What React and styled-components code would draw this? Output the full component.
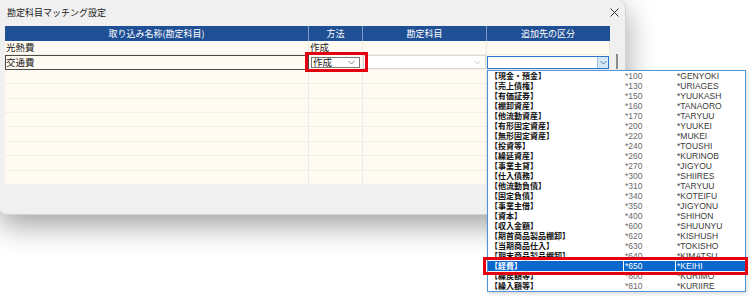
import React from 'react'
import styled, { createGlobalStyle } from 'styled-components'

const GlobalStyle = createGlobalStyle`
  html, body {
    margin: 0;
    padding: 0;
    background: #ffffff;
  }
  body {
    font-family: "Noto Sans CJK JP", "Noto Sans", sans-serif;
    color: #1a1a1a;
  }
`

const Page = styled.div`
  position: relative;
  width: 750px;
  height: 296px;
  overflow: hidden;
  background: #ffffff;
`

const Dialog = styled.div`
  width: 626px;
  height: 215px;
  box-sizing: border-box;
  background: #f0f0f0;
  border: 1px solid #d2d2d2;
  border-top: none;
  border-left: none;
  border-radius: 0 8px 8px 6px;
  box-shadow: 0 10px 30px rgba(0, 0, 0, 0.38);
  display: flex;
  flex-direction: column;
`

const TitleBar = styled.div`
  height: 25px;
  display: flex;
  align-items: center;
  justify-content: space-between;
  padding: 0 6px 1px 7px;
  font-size: 9px;
  color: #222;
`

const Body = styled.div`
  display: flex;
  gap: 6px;
  padding-left: 5px;
`

const Table = styled.div`
  width: 605px;
  display: grid;
  grid-template-columns: 304px 54px 124px 123px;
  grid-template-rows: 15px repeat(10, 14.4px);
`

const HeadCell = styled.div`
  background: #1f5096;
  color: #ffffff;
  font-size: 9px;
  display: flex;
  align-items: center;
  justify-content: center;
  border-right: 1px solid ${p => (p.$last ? '#1f5096' : '#7f9cc8')};
`

const Cell = styled.div`
  box-sizing: border-box;
  background: #fffbf2;
  border-right: 1px solid #eceae4;
  border-bottom: 1px solid #f2efe6;
  font-size: 9.5px;
  line-height: 13px;
  padding-left: 1px;
  white-space: nowrap;
  display: flex;
  align-items: center;
`

const EditCell = styled(Cell)`
  border: 1px solid #4a4a4a;
  padding-left: 0;
`

const SlotCell = styled(Cell)`
  padding: ${p => p.$pad || '0'};
  align-items: stretch;
`

const Combo = styled.div`
  flex: 1;
  box-sizing: border-box;
  display: flex;
  align-items: center;
  justify-content: space-between;
  background: #ffffff;
  font-size: 9.5px;
  padding-left: 1px;
  border: 1px solid ${p => (p.$tone === 'focus' ? '#2a78d2' : p.$tone === 'muted' ? '#d9d9d9' : '#7a7a7a')};
`

const DropButton = styled.div`
  width: 10px;
  align-self: stretch;
  display: flex;
  align-items: center;
  justify-content: center;
  background: ${p => (p.$tone === 'focus' ? '#d6e8f8' : 'transparent')};
  border-left: 1px solid ${p => (p.$tone === 'focus' ? '#9cc3ea' : 'transparent')};
  margin-right: ${p => (p.$tone === 'focus' ? '0' : '3px')};
`

const ScrollTrack = styled.div`
  width: 2px;
  padding-top: 28px;
`

const ScrollThumb = styled.div`
  width: 2px;
  height: 15px;
  background: #8c8c8c;
`

const DropList = styled.div`
  position: absolute;
  left: 487px;
  top: 70px;
  width: 259px;
  box-sizing: border-box;
  background: #ffffff;
  border: 1px solid #4f93d8;
  box-shadow: 1px 2px 4px rgba(0, 0, 0, 0.15);
`

const Item = styled.div`
  display: grid;
  grid-template-columns: 135px 52px 1fr;
  height: 10px;
  line-height: 10px;
  font-size: 8px;
  background: ${p => (p.$active ? '#0a67cb' : 'transparent')};
  color: ${p => (p.$active ? '#ffffff' : '#111111')};
`

const ItemName = styled.span`
  padding-left: 2px;
  white-space: nowrap;
  font-weight: 700;
`

const ItemCode = styled.span`
  padding-left: 1px;
  white-space: nowrap;
  color: ${p => (p.$active ? '#ffffff' : p.$dim ? '#6a6a6a' : '#3a3a3a')};
  border-left: 1px solid ${p => (p.$active ? '#ffffff' : 'transparent')};
  font-family: "Liberation Sans", "Noto Sans", sans-serif;
  font-size: 8.5px;
`

const Callout = styled.div`
  position: absolute;
  left: ${p => p.$x}px;
  top: ${p => p.$y}px;
  width: ${p => p.$w}px;
  height: ${p => p.$h}px;
  box-sizing: border-box;
  border: 3px solid #e4000f;
  pointer-events: none;
`

const Chevron = ({ color = '#777' }) => (
  <svg width="7" height="5" viewBox="0 0 7 5">
    <polyline points="0.5,1 3.5,4 6.5,1" fill="none" stroke={color} strokeWidth="0.9" />
  </svg>
)

const CloseIcon = () => (
  <svg width="9" height="9" viewBox="0 0 9 9">
    <path d="M0.5 0.5 L8.5 8.5 M8.5 0.5 L0.5 8.5" stroke="#333" strokeWidth="1" fill="none" />
  </svg>
)

const items = [
  ['【現金・預金】', '*100', '*GENYOKI'],
  ['【売上債権】', '*130', '*URIAGES'],
  ['【有価証券】', '*150', '*YUUKASH'],
  ['【棚卸資産】', '*160', '*TANAORO'],
  ['【他流動資産】', '*170', '*TARYUU'],
  ['【有形固定資産】', '*200', '*YUUKEI'],
  ['【無形固定資産】', '*220', '*MUKEI'],
  ['【投資等】', '*240', '*TOUSHI'],
  ['【繰延資産】', '*260', '*KURINOB'],
  ['【事業主貸】', '*270', '*JIGYOU'],
  ['【仕入債務】', '*300', '*SHIIRES'],
  ['【他流動負債】', '*310', '*TARYUU'],
  ['【固定負債】', '*340', '*KOTEIFU'],
  ['【事業主借】', '*350', '*JIGYONU'],
  ['【資本】', '*400', '*SHIHON'],
  ['【収入金額】', '*600', '*SHUUNYU'],
  ['【期首商品製品棚卸】', '*620', '*KISHUSH'],
  ['【当期商品仕入】', '*630', '*TOKISHO'],
  ['【期末商品製品棚卸】', '*640', '*KIMATSU'],
  ['【経費】', '*650', '*KEIHI'],
  ['【繰戻額等】', '*800', '*KURIMO'],
  ['【繰入額等】', '*810', '*KURIIRE'],
]

const emptyRows = Array.from({ length: 8 })

const App = () => {
  return (
    <Page>
      <GlobalStyle />
      <Dialog>
        <TitleBar>
          <span>勘定科目マッチング設定</span>
          <CloseIcon />
        </TitleBar>
        <Body>
          <Table>
            <HeadCell>取り込み名称(勘定科目)</HeadCell>
            <HeadCell>方法</HeadCell>
            <HeadCell>勘定科目</HeadCell>
            <HeadCell $last>追加先の区分</HeadCell>

            <Cell>光熱費</Cell>
            <Cell>作成</Cell>
            <Cell />
            <Cell />

            <EditCell>交通費</EditCell>
            <SlotCell $pad="2px 2px 1px 2px">
              <Combo>
                <span>作成</span>
                <DropButton>
                  <Chevron />
                </DropButton>
              </Combo>
            </SlotCell>
            <SlotCell>
              <Combo $tone="muted">
                <span />
                <DropButton>
                  <Chevron color="#c4c4c4" />
                </DropButton>
              </Combo>
            </SlotCell>
            <SlotCell $pad="1px 0 0 0">
              <Combo $tone="focus">
                <span />
                <DropButton $tone="focus">
                  <Chevron color="#4a6f96" />
                </DropButton>
              </Combo>
            </SlotCell>

            {emptyRows.map((_, i) => (
              <React.Fragment key={i}>
                <Cell />
                <Cell />
                <Cell />
                <Cell />
              </React.Fragment>
            ))}
          </Table>
          <ScrollTrack>
            <ScrollThumb />
          </ScrollTrack>
        </Body>
      </Dialog>

      <DropList>
        {items.map(([name, code, key]) => {
          const active = name === '【経費】'
          return (
            <Item key={name + code} $active={active}>
              <ItemName>{name}</ItemName>
              <ItemCode $active={active} $dim>{code}</ItemCode>
              <ItemCode $active={active}>{key}</ItemCode>
            </Item>
          )
        })}
      </DropList>

      <Callout $x={305} $y={52} $w={63} $h={20} />
      <Callout $x={483} $y={257} $w={265} $h={18} />
    </Page>
  )
}

export default App
